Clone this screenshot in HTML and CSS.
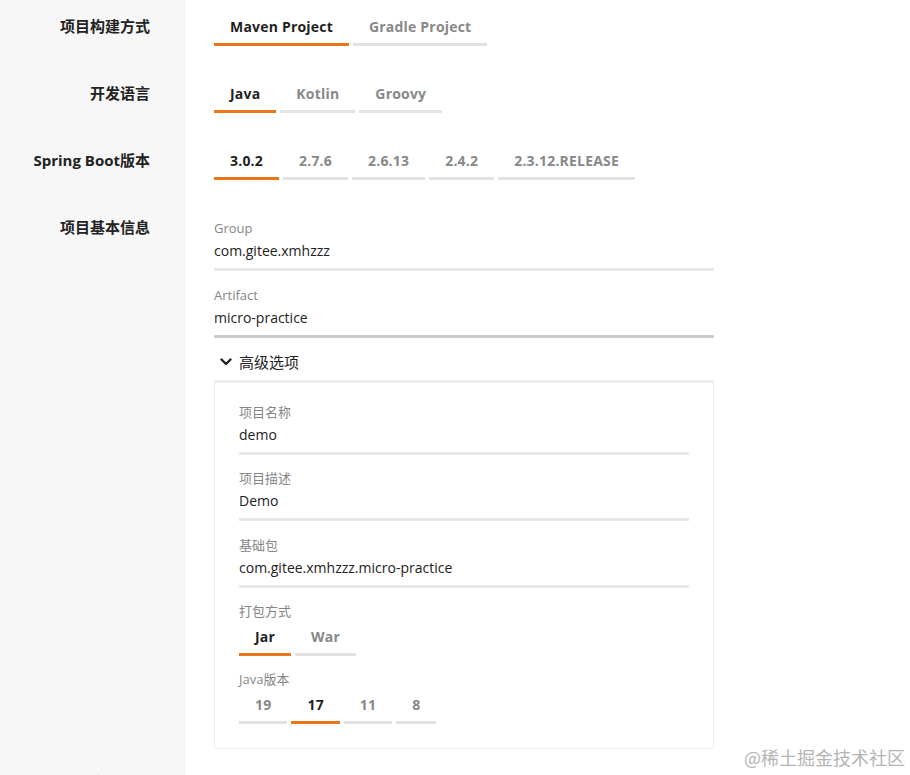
FILE: index.html
```html
<!DOCTYPE html>
<html lang="zh-CN">
<head>
<meta charset="utf-8">
<title>项目配置</title>
<link rel="stylesheet" href="styles.css">
</head>
<body>
<div class="page">
  <div class="row">
    <div class="label">项目构建方式</div>
    <div class="content">
      <div class="tabs">
        <span class="tab active">Maven Project</span>
        <span class="tab">Gradle Project</span>
      </div>
    </div>
  </div>
  <div class="row">
    <div class="label">开发语言</div>
    <div class="content">
      <div class="tabs">
        <span class="tab active">Java</span>
        <span class="tab">Kotlin</span>
        <span class="tab">Groovy</span>
      </div>
    </div>
  </div>
  <div class="row">
    <div class="label">Spring Boot版本</div>
    <div class="content">
      <div class="tabs">
        <span class="tab active">3.0.2</span>
        <span class="tab">2.7.6</span>
        <span class="tab">2.6.13</span>
        <span class="tab">2.4.2</span>
        <span class="tab">2.3.12.RELEASE</span>
      </div>
    </div>
  </div>
  <div class="row row-info">
    <div class="label">项目基本信息</div>
    <div class="content content-info">
      <div class="field">
        <div class="field-label">Group</div>
        <div class="field-value">com.gitee.xmhzzz</div>
      </div>
      <div class="field field-focus">
        <div class="field-label">Artifact</div>
        <div class="field-value">micro-practice</div>
      </div>
      <div class="toggle">
        <svg class="chevron" width="12" height="8" viewBox="0 0 12 8"><polyline points="1.5,1.5 6,6 10.5,1.5" fill="none" stroke="#222" stroke-width="2.4" stroke-linecap="round" stroke-linejoin="round"/></svg>
        <span>高级选项</span>
      </div>
      <div class="advanced">
        <div class="field">
          <div class="field-label">项目名称</div>
          <div class="field-value">demo</div>
        </div>
        <div class="field">
          <div class="field-label">项目描述</div>
          <div class="field-value">Demo</div>
        </div>
        <div class="field field-wide-gap">
          <div class="field-label">基础包</div>
          <div class="field-value">com.gitee.xmhzzz.micro-practice</div>
        </div>
        <div class="field">
          <div class="field-label">打包方式</div>
          <div class="tabs tabs-small">
            <span class="tab active">Jar</span>
            <span class="tab">War</span>
          </div>
        </div>
        <div class="field">
          <div class="field-label">Java版本</div>
          <div class="tabs tabs-small">
            <span class="tab">19</span>
            <span class="tab active">17</span>
            <span class="tab">11</span>
            <span class="tab">8</span>
          </div>
        </div>
      </div>
    </div>
  </div>
  <div class="row">
    <div class="label">应用架构</div>
    <div class="content">
      <div class="tabs">
        <span class="tab active">单模块</span>
        <span class="tab">分层架构</span>
      </div>
    </div>
  </div>
</div>
<div class="watermark">@稀土掘金技术社区</div>
</body>
</html>
```
FILE: styles.css
```css
html, body {
  margin: 0;
  padding: 0;
  background: #ffffff;
  overflow: hidden;
}
body {
  font-family: "Open Sans", "Noto Sans CJK SC", sans-serif;
  color: #222222;
  position: relative;
  height: 775px;
}
.page {
  display: flex;
  flex-direction: column;
}
.row {
  display: grid;
  grid-template-columns: 186px 1fr;
}
.label {
  background: #f7f7f7;
  text-align: right;
  padding: 16px 36px 0 0;
  font-size: 15px;
  font-weight: 700;
  line-height: 20px;
  color: #222;
}
.content {
  padding: 9px 0 21px 28px;
}
.tabs {
  display: flex;
  gap: 4px;
}
.tab {
  display: block;
  padding: 8px 16px 6px;
  font-size: 14px;
  font-weight: 700;
  line-height: 20px;
  color: #888888;
  border-bottom: 3px solid #e2e2e2;
  letter-spacing: 0.2px;
}
.tab.active {
  color: #1f1f1f;
  border-bottom-color: #ec7419;
}
.tabs-small .tab {
  padding-top: 3px;
}
.row-info .content-info {
  padding: 18px 0 7px 28px;
  width: 500px;
}
.field {
  display: flex;
  flex-direction: column;
}
.field + .field {
  margin-top: 15px;
}
.advanced .field + .field {
  margin-top: 14px;
}
.advanced .field.field-wide-gap {
  margin-top: 15px;
}
.field-label {
  font-size: 13px;
  line-height: 18px;
  color: #858585;
  margin-bottom: 4px;
}
.field-value {
  font-size: 14px;
  line-height: 20px;
  color: #222;
  padding-bottom: 7px;
  border-bottom: 3px solid #e8e8e8;
}
.field-focus .field-value {
  border-bottom-color: #cccccc;
}
.toggle {
  display: flex;
  align-items: center;
  gap: 7px;
  margin: 14px 0 8px 6px;
  font-size: 15px;
  line-height: 20px;
  color: #222;
}
.advanced {
  border: 1px solid #f1f1f1;
  border-top: 3px solid #ececec;
  padding: 20px 24px 24px;
}
.watermark {
  position: absolute;
  right: 5px;
  top: 745px;
  font-family: "Noto Sans CJK SC", sans-serif;
  font-size: 18px;
  line-height: 24px;
  color: #b4b4b4;
}
```
